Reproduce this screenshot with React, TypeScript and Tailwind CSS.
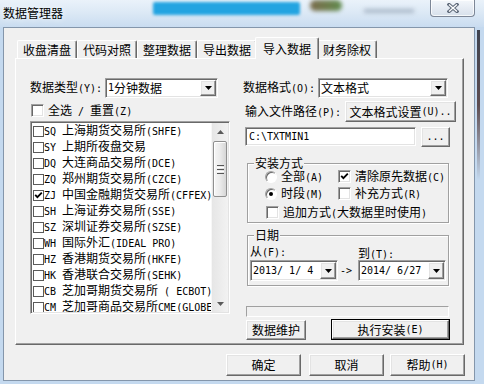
import React from "react";

const ASCII = /^[\x20-\x7e]+$/;
function T({ s }: { s: string }) {
  const parts = s.split(/([\x20-\x7e]+)/).filter((p) => p.length > 0);
  return (
    <>
      {parts.map((p, i) =>
        ASCII.test(p) ? (
          <span key={i} className="font-['DejaVu_Sans_Mono',monospace] text-[10px] whitespace-pre">
            {p}
          </span>
        ) : (
          <span key={i}>{p}</span>
        )
      )}
    </>
  );
}

const raised =
  "bg-[#f0f0f0] border border-t-white border-l-white border-r-[#696969] border-b-[#696969] shadow-[inset_-1px_-1px_0_#a0a0a0,inset_1px_1px_0_#e3e3e3]";
const sunken =
  "border border-t-[#a0a0a0] border-l-[#a0a0a0] border-r-white border-b-white shadow-[inset_1px_1px_0_#696969,inset_-1px_-1px_0_#e3e3e3] bg-white";

function Btn({ cls, children }: { cls: string; children: React.ReactNode }) {
  return (
    <div className={`${raised} ${cls} flex items-center justify-center whitespace-nowrap`}>{children}</div>
  );
}

function DefBtn({ cls, children }: { cls: string; children: React.ReactNode }) {
  return (
    <div className={`${cls} border border-black flex`}>
      <div className={`${raised} flex-1 flex items-center justify-center whitespace-nowrap`}>{children}</div>
    </div>
  );
}

function Tri() {
  return (
    <svg width="7" height="4" viewBox="0 0 7 4">
      <path d="M0 0h7L3.5 4z" fill="#000" />
    </svg>
  );
}

function Combo({ cls, text }: { cls: string; text: string }) {
  return (
    <div className={`${sunken} ${cls} flex p-[1px]`}>
      <div className="flex-1 flex items-center pl-[1px] whitespace-nowrap overflow-hidden leading-[12px]">
        <T s={text} />
      </div>
      <div className={`${raised} w-[16px] flex items-center justify-center`}>
        <Tri />
      </div>
    </div>
  );
}

function Tick() {
  return (
    <svg width="9" height="9" viewBox="0 0 9 9">
      <path d="M1.2 3.8 L3.4 6.2 L7.8 1.6" stroke="#000" strokeWidth="1.8" fill="none" />
    </svg>
  );
}

function Check({ on }: { on?: boolean }) {
  return (
    <div className={`w-[13px] h-[13px] shrink-0 ${sunken} flex items-center justify-center`}>
      {on && <Tick />}
    </div>
  );
}

function Radio({ on }: { on?: boolean }) {
  return (
    <div className="w-[12px] h-[12px] shrink-0 rounded-full border border-t-[#a0a0a0] border-l-[#a0a0a0] border-r-white border-b-white bg-white shadow-[inset_1px_1px_0_#696969] flex items-center justify-center">
      {on && <div className="w-[4px] h-[4px] rounded-full bg-black" />}
    </div>
  );
}

const rows: [string, boolean][] = [
  ["SQ 上海期货交易所(SHFE)", false],
  ["SY 上期所夜盘交易", false],
  ["DQ 大连商品交易所(DCE)", false],
  ["ZQ 郑州期货交易所(CZCE)", false],
  ["ZJ 中国金融期货交易所(CFFEX)", true],
  ["SH 上海证券交易所(SSE)", false],
  ["SZ 深圳证券交易所(SZSE)", false],
  ["WH 国际外汇(IDEAL PRO)", false],
  ["HZ 香港期货交易所(HKFE)", false],
  ["HK 香港联合交易所(SEHK)", false],
  ["CB 芝加哥期货交易所 ( ECBOT)", false],
  ["CM 芝加哥商品交易所CME(GLOBE", false],
];

const tabs = ["收盘清盘", "代码对照", "整理数据", "导出数据", "导入数据", "财务除权"];

function Tab({ label, sel }: { label: string; sel: boolean }) {
  if (sel)
    return (
      <div className="relative z-10 -mx-[2px] -mb-px w-[64px] h-[22px] bg-[#f0f0f0] rounded-t-[2px] border-t border-l border-r border-t-white border-l-white border-r-[#696969] shadow-[inset_-1px_0_0_#a0a0a0] flex justify-center pt-[4px]">
        {label}
      </div>
    );
  return (
    <div className="w-[60px] h-[18px] bg-[#f0f0f0] rounded-t-[2px] border-t border-l border-r border-t-white border-l-white border-r-[#696969] shadow-[inset_-1px_0_0_#a0a0a0] flex items-center justify-center">
      {label}
    </div>
  );
}

function ScrollBar() {
  return (
    <div className="w-[17px] flex flex-col bg-gradient-to-r from-[#e6e6e6] to-[#f2f2f2] border-l border-[#f7f7f7]">
      <div className="h-[17px] flex items-center justify-center">
        <svg width="7" height="4" viewBox="0 0 7 4">
          <path d="M0 4h7L3.5 0z" fill="#5a5a5a" />
        </svg>
      </div>
      <div className="mt-[1px] mx-[1px] h-[56px] rounded-[2px] border border-[#8f8f8f] bg-gradient-to-r from-[#f6f6f6] via-[#ebebeb] to-[#d6d6d6] shadow-[inset_1px_1px_0_#fff] flex flex-col items-center justify-center gap-[1px]">
        <div className="w-[7px] h-[1px] bg-[#555]" />
        <div className="w-[7px] h-[1px] bg-[#fff]" />
        <div className="w-[7px] h-[1px] bg-[#555]" />
        <div className="w-[7px] h-[1px] bg-[#fff]" />
        <div className="w-[7px] h-[1px] bg-[#555]" />
      </div>
      <div className="flex-1" />
      <div className="h-[17px] flex items-center justify-center">
        <svg width="7" height="4" viewBox="0 0 7 4">
          <path d="M0 0h7L3.5 4z" fill="#5a5a5a" />
        </svg>
      </div>
    </div>
  );
}

function CloseBtn() {
  return (
    <div className="w-[45px] h-[17px] rounded-b-[4px] border border-t-0 border-[#7d8797] bg-gradient-to-b from-[#f4f7fb] to-[#d7e0eb] shadow-[inset_0_0_0_1px_rgba(255,255,255,0.75)] flex items-center justify-center">
      <svg width="12" height="10" viewBox="0 0 12 10">
        <path d="M2 1.5 L10 8.5 M10 1.5 L2 8.5" stroke="#5f6a7a" strokeWidth="3.4" strokeLinecap="square" />
        <path d="M2 1.5 L10 8.5 M10 1.5 L2 8.5" stroke="#ffffff" strokeWidth="1.3" />
      </svg>
    </div>
  );
}

export default function App() {
  return (
    <div className="w-[484px] h-[384px] overflow-hidden flex flex-col bg-[#c4d9ef] font-['Noto_Sans_CJK_SC',sans-serif] text-[12px] leading-[14px] text-black">
      {/* title bar */}
      <div className="h-[27px] shrink-0 flex bg-gradient-to-b from-[#eaf2fa] via-[#dbe8f5] to-[#c9dcf0]">
        <div className="pl-[3px] pt-[6px] w-[153px] [text-shadow:0_0_6px_#fff]">数据管理器</div>
        <div className="mt-[2px] w-[147px] h-[13px] bg-[#23a4e1] blur-[1.5px] rounded-[2px]" />
        <div className="ml-[10px] w-[32px] h-[11px] bg-gradient-to-r from-[#7a6b4c] to-[#5f8c4e] blur-[2px] rounded-full" />
        <div className="ml-[22px] mt-[9px] w-[50px] h-[4px] bg-[#aab8c8] blur-[2px]" />
        <div className="flex-1" />
        <CloseBtn />
        <div className="w-[9px]" />
      </div>

      <div className="flex flex-1">
        <div className="w-[3px]" />
        {/* client */}
        <div className="w-[472px] h-[354px] bg-[#f0f0f0] border border-[#8496ab] pt-[9px] pl-[11px] flex flex-col">
          {/* tabs */}
          <div className="flex items-end ml-[2px] h-[21px]">
            {tabs.map((t, i) => (
              <Tab key={t} label={t} sel={i === 4} />
            ))}
          </div>
          {/* panel */}
          <div className="w-[449px] h-[287px] bg-[#f0f0f0] border border-t-white border-l-white border-r-[#696969] border-b-[#696969] shadow-[inset_-1px_-1px_0_#a0a0a0] flex pl-[14px]">
            {/* left column */}
            <div className="w-[200px] flex flex-col">
              <div className="mt-[19px] h-[20px] flex items-center">
                <div className="w-[75px] whitespace-nowrap">
                  <T s="数据类型(Y):" />
                </div>
                <Combo cls="w-[113px] h-[20px]" text="1分钟数据" />
              </div>
              <div className="mt-[6px] h-[13px] flex items-center">
                <div className="ml-[1px]">
                  <Check />
                </div>
                <div className="ml-[4px] whitespace-nowrap leading-[12px]">
                  <T s="全选 / 重置(Z)" />
                </div>
              </div>
              <div className={`mt-[4px] w-[200px] h-[193px] ${sunken} p-[1px] flex`}>
                <div className="flex-1 overflow-hidden flex flex-col">
                  {rows.map(([r, on]) => (
                    <div key={r} className="h-[16px] shrink-0 flex items-center pl-[1px] whitespace-nowrap leading-[12px]">
                      <div className="w-[11px] h-[11px] shrink-0 border border-[#5a5a5a] bg-white flex items-center justify-center">
                        {on && <Tick />}
                      </div>
                      <div>
                        <T s={r} />
                      </div>
                    </div>
                  ))}
                </div>
                <ScrollBar />
              </div>
            </div>

            {/* right column */}
            <div className="ml-[13px] w-[213px] flex flex-col">
              <div className="mt-[19px] h-[20px] flex items-center">
                <div className="w-[75px] whitespace-nowrap">
                  <T s="数据格式(O):" />
                </div>
                <Combo cls="w-[130px] h-[20px]" text="文本格式" />
              </div>
              <div className="mt-[3px] h-[21px] flex items-center">
                <div className="ml-[2px] w-[100px] whitespace-nowrap">
                  <T s="输入文件路径(P):" />
                </div>
                <Btn cls="w-[111px] h-[21px]">
                  <T s="文本格式设置(U).." />
                </Btn>
              </div>
              <div className="mt-[5px] h-[20px] flex items-start">
                <div className={`ml-[2px] w-[171px] h-[19px] ${sunken} flex items-center pl-[3px]`}>
                  <T s="C:\TXTMIN1" />
                </div>
                <Btn cls="ml-[5px] w-[29px] h-[20px]">
                  <T s="..." />
                </Btn>
              </div>

              {/* group 安装方式 */}
              <fieldset className="mt-[10px] ml-[4px] w-[202px] border border-[#a0a0a0] shadow-[inset_1px_1px_0_#fff,1px_1px_0_#fff]">
                <legend className="ml-[6px] px-[1px] leading-[12px] bg-[#f0f0f0]">安装方式</legend>
                <div className="pl-[17px] pb-[3px] flex flex-col leading-[12px]">
                  <div className="mt-[1px] h-[13px] flex items-center">
                    <div className="w-[73px] flex items-center">
                      <Radio />
                      <div className="ml-[4px] whitespace-nowrap">
                        <T s="全部(A)" />
                      </div>
                    </div>
                    <Check on />
                    <div className="ml-[4px] whitespace-nowrap">
                      <T s="清除原先数据(C)" />
                    </div>
                  </div>
                  <div className="mt-[4px] h-[13px] flex items-center">
                    <div className="w-[73px] flex items-center">
                      <Radio on />
                      <div className="ml-[4px] whitespace-nowrap">
                        <T s="时段(M)" />
                      </div>
                    </div>
                    <Check />
                    <div className="ml-[4px] whitespace-nowrap">
                      <T s="补充方式(R)" />
                    </div>
                  </div>
                  <div className="mt-[6px] h-[13px] flex items-center">
                    <div className="ml-[1px]">
                      <Check />
                    </div>
                    <div className="ml-[4px] whitespace-nowrap">
                      <T s="追加方式(大数据里时使用)" />
                    </div>
                  </div>
                </div>
              </fieldset>

              {/* group 日期 */}
              <fieldset className="mt-[6px] ml-[4px] w-[202px] border border-[#a0a0a0] shadow-[inset_1px_1px_0_#fff,1px_1px_0_#fff]">
                <legend className="ml-[6px] px-[1px] leading-[12px] bg-[#f0f0f0]">日期</legend>
                <div className="pl-[2px] pb-[4px] flex items-end">
                  <div className="flex flex-col">
                    <div className="mt-[4px] h-[12px] leading-[12px] whitespace-nowrap">
                      <T s="从(F):" />
                    </div>
                    <Combo cls="mt-[3px] w-[88px] h-[21px]" text="2013/ 1/ 4" />
                  </div>
                  <div className="ml-[2px] w-[18px] h-[21px] flex items-center">
                    <T s="->" />
                  </div>
                  <div className="flex flex-col">
                    <div className="h-[12px] leading-[12px] whitespace-nowrap">
                      <T s="到(T):" />
                    </div>
                    <Combo cls="mt-[1px] w-[88px] h-[21px]" text="2014/ 6/27" />
                  </div>
                </div>
              </fieldset>

              <div className="mt-[20px] ml-[3px] w-[203px] h-[11px] border border-t-[#a0a0a0] border-l-[#a0a0a0] border-r-white border-b-white" />

              <div className="mt-[2px] h-[21px] flex items-center">
                <Btn cls="ml-[3px] w-[60px] h-[20px]">数据维护</Btn>
                <DefBtn cls="ml-[25px] w-[119px] h-[21px]">
                  <T s="执行安装(E)" />
                </DefBtn>
              </div>
            </div>
          </div>

          {/* bottom buttons */}
          <div className="mt-[9px] flex justify-end pr-[9px]">
            <Btn cls="w-[75px] h-[22px]">确定</Btn>
            <Btn cls="ml-[8px] w-[75px] h-[22px]">取消</Btn>
            <Btn cls="ml-[6px] w-[75px] h-[22px]">
              <T s="帮助(H)" />
            </Btn>
          </div>
        </div>
        {/* right frame */}
        <div className="w-[9px] flex flex-col">
          <div className="ml-[2px] mt-[3px] w-[3px] h-[150px] bg-gradient-to-b from-[#3f434f] via-[#5d4c50] to-[#c4d9ef] blur-[0.5px]" />
        </div>
      </div>
      <div className="h-[3px] shrink-0" />
    </div>
  );
}
